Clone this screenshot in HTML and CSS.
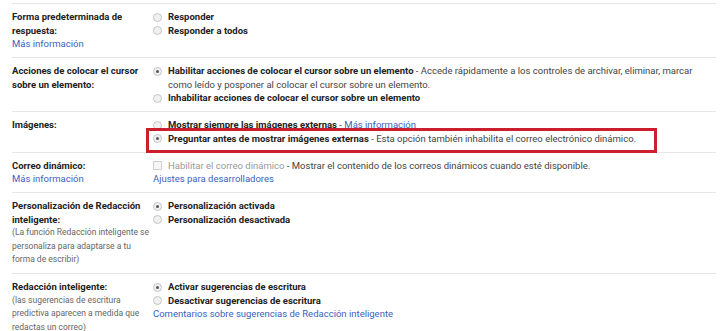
FILE: index.html
```html
<!DOCTYPE html>
<html lang="es">
<head>
    <meta charset="UTF-8">
    <title>Configuración</title>
    <link rel="stylesheet" href="styles.css">
</head>
<body>

<div class="settings">

    <!-- Forma de respuesta -->
    <div class="row">
        <div class="label">
            <b>Forma predeterminada de<br>respuesta:</b><br>
            <a href="#">Más información</a>
        </div>
        <div class="options">
            <div class="opt"><span class="radio"></span><span class="txt"><b>Responder</b></span></div>
            <div class="opt"><span class="radio"></span><span class="txt"><b>Responder a todos</b></span></div>
        </div>
    </div>

    <!-- Acciones al pasar el cursor -->
    <div class="row">
        <div class="label"><b>Acciones de colocar el cursor<br>sobre un elemento:</b></div>
        <div class="options">
            <div class="opt"><span class="radio on"></span><span class="txt"><b>Habilitar acciones de colocar el cursor sobre un elemento</b> - Accede rápidamente a los controles de archivar, eliminar, marcar<br>como leído y posponer al colocar el cursor sobre un elemento.</span></div>
            <div class="opt"><span class="radio"></span><span class="txt"><b>Inhabilitar acciones de colocar el cursor sobre un elemento</b></span></div>
        </div>
    </div>

    <!-- Imágenes -->
    <div class="row">
        <div class="label"><b>Imágenes:</b></div>
        <div class="options">
            <div class="opt"><span class="radio"></span><span class="txt"><b>Mostrar siempre las imágenes externas</b> - <a href="#">Más información</a></span></div>
            <div class="opt marked"><span class="radio on"></span><span class="txt"><b>Preguntar antes de mostrar imágenes externas</b> - Esta opción también inhabilita el correo electrónico dinámico.</span></div>
        </div>
    </div>

    <!-- Correo dinámico -->
    <div class="row">
        <div class="label">
            <b>Correo dinámico:</b><br>
            <a href="#">Más información</a>
        </div>
        <div class="options">
            <div class="opt"><span class="check"></span><span class="txt"><span class="disabled">Habilitar el correo dinámico</span> - Mostrar el contenido de los correos dinámicos cuando esté disponible.</span></div>
            <a href="#">Ajustes para desarrolladores</a>
        </div>
    </div>

    <!-- Personalización -->
    <div class="row">
        <div class="label">
            <b>Personalización de Redacción<br>inteligente:</b>
            <div class="note">(La función Redacción inteligente se<br>personaliza para adaptarse a tu<br>forma de escribir)</div>
        </div>
        <div class="options">
            <div class="opt"><span class="radio on"></span><span class="txt"><b>Personalización activada</b></span></div>
            <div class="opt"><span class="radio"></span><span class="txt"><b>Personalización desactivada</b></span></div>
        </div>
    </div>

    <!-- Redacción inteligente -->
    <div class="row">
        <div class="label">
            <b>Redacción inteligente:</b>
            <div class="note">(las sugerencias de escritura<br>predictiva aparecen a medida que<br>redactas un correo)</div>
        </div>
        <div class="options">
            <div class="opt"><span class="radio on"></span><span class="txt"><b>Activar sugerencias de escritura</b></span></div>
            <div class="opt"><span class="radio"></span><span class="txt"><b>Desactivar sugerencias de escritura</b></span></div>
            <a href="#">Comentarios sobre sugerencias de Redacción inteligente</a>
        </div>
    </div>

</div>

</body>
</html>
```

FILE: styles.css
```css
body {
    margin: 0;
    background-color: #fff;
    font-family: Roboto, Arial, sans-serif;
    font-size: 9.5px;
    line-height: 13.5px;
    color: #444;
}

.settings {
    padding: 3px 4px 0 12px;
}

.row {
    display: grid;
    grid-template-columns: 141px 1fr;
    border-top: 1px solid #e6e6e6;
    padding: 6px 0 6.5px;
}

b {
    color: #222;
    font-weight: bold;
}

a {
    color: #3b62bd;
    text-decoration: none;
}

.label {
    white-space: nowrap;
}

.note {
    font-size: 8.5px;
    color: #666;
}

.options {
    white-space: nowrap;
}

.opt {
    display: flex;
    align-items: flex-start;
    gap: 6px;
}

.radio {
    flex: none;
    width: 7px;
    height: 7px;
    margin-top: 2.5px;
    border: 1px solid #c6c6c6;
    border-radius: 50%;
    background-color: #f1f1f1;
    display: flex;
    align-items: center;
    justify-content: center;
}

.radio.on::after {
    content: "";
    width: 3px;
    height: 3px;
    border-radius: 50%;
    background-color: #555;
}

.check {
    flex: none;
    width: 7px;
    height: 7px;
    margin-top: 2.5px;
    border: 1px solid #d0d0d0;
    background-color: #f6f6f6;
}

.disabled {
    color: #999;
}

.marked {
    position: relative;
}

.marked::after {
    content: "";
    position: absolute;
    left: -7px;
    top: -4px;
    width: 505px;
    height: 19px;
    border: 3px solid #cc1f2d;
}
```
